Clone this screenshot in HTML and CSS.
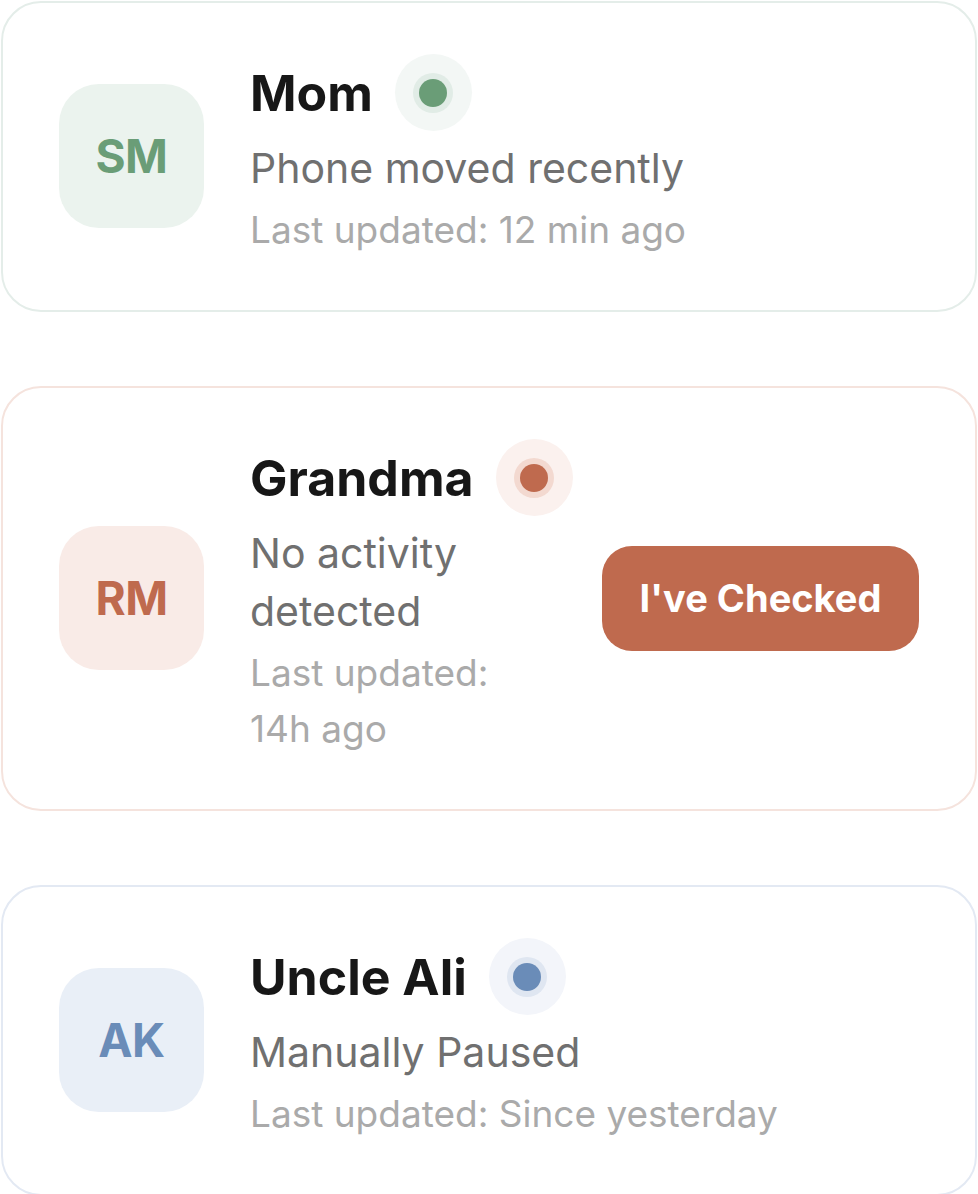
FILE: index.html
```html
<!DOCTYPE html>
<html lang="en">
<head>
<meta charset="utf-8">
<title>Family status</title>
<link rel="stylesheet" href="styles.css">
</head>
<body>
<div class="list">
  <div class="card card-green">
    <div class="avatar">SM</div>
    <div class="info">
      <div class="name-row">
        <span class="name">Mom</span>
        <span class="dot"><span class="dot-ring"><span class="dot-core"></span></span></span>
      </div>
      <div class="status">Phone moved recently</div>
      <div class="updated">Last updated: 12 min ago</div>
    </div>
  </div>

  <div class="card card-red">
    <div class="avatar">RM</div>
    <div class="info info-narrow">
      <div class="name-row">
        <span class="name">Grandma</span>
        <span class="dot"><span class="dot-ring"><span class="dot-core"></span></span></span>
      </div>
      <div class="status">No activity detected</div>
      <div class="updated">Last updated: 14h ago</div>
    </div>
    <button class="check-btn">I've Checked</button>
  </div>

  <div class="card card-blue">
    <div class="avatar">AK</div>
    <div class="info">
      <div class="name-row">
        <span class="name">Uncle Ali</span>
        <span class="dot"><span class="dot-ring"><span class="dot-core"></span></span></span>
      </div>
      <div class="status">Manually Paused</div>
      <div class="updated">Last updated: Since yesterday</div>
    </div>
  </div>
</div>
</body>
</html>
```

FILE: styles.css
```css
* { box-sizing: border-box; }

html, body {
  margin: 0;
  padding: 0;
  background: #ffffff;
}

body {
  font-family: Inter, "Noto Sans", "Liberation Sans", sans-serif;
  color: #1a1a1a;
}

.list {
  display: flex;
  flex-direction: column;
  gap: 74px;
  padding: 1px;
}

.card {
  display: flex;
  align-items: center;
  gap: 46px;
  padding: 51px 56px 52px;
  border: 2px solid #e4ede9;
  border-radius: 40px;
  background: #ffffff;
}

.card-red { border-color: #f5e3dd; }
.card-blue { border-color: #e3e9f3; }

.avatar {
  flex: none;
  width: 145px;
  height: 144px;
  border-radius: 40px;
  display: flex;
  align-items: center;
  justify-content: center;
  font-size: 46px;
  font-weight: 700;
  letter-spacing: -0.5px;
}

.card-green .avatar { background: #ebf3ee; color: #6a9d77; }
.card-red .avatar { background: #f9ebe7; color: #bf6a4e; }
.card-blue .avatar { background: #e9eff7; color: #6a8cb8; }

.info {
  flex: 1;
  min-width: 0;
  display: flex;
  flex-direction: column;
}

.name-row {
  display: flex;
  align-items: center;
  gap: 22px;
  height: 77px;
}

.name {
  font-size: 50px;
  font-weight: 700;
  color: #171717;
}

.dot {
  flex: none;
  width: 77px;
  height: 77px;
  border-radius: 50%;
  display: flex;
  align-items: center;
  justify-content: center;
}

.dot-ring {
  width: 40px;
  height: 40px;
  border-radius: 50%;
  display: flex;
  align-items: center;
  justify-content: center;
}

.dot-core {
  width: 28px;
  height: 28px;
  border-radius: 50%;
}

.card-green .dot { background: #f3f7f5; }
.card-green .dot-ring { background: #e1ece6; }
.card-green .dot-core { background: #6a9d77; }

.card-red .dot { background: #fbf1ee; }
.card-red .dot-ring { background: #f3d9d0; }
.card-red .dot-core { background: #bf6a4e; }

.card-blue .dot { background: #f3f5fa; }
.card-blue .dot-ring { background: #dfe6f1; }
.card-blue .dot-core { background: #6a8cb8; }

.status {
  font-size: 41px;
  line-height: 58px;
  color: #707070;
  margin-top: 8px;
}

.updated {
  font-size: 37px;
  line-height: 56px;
  color: #aaaaaa;
  margin-top: 5px;
}

.info-narrow { flex: 0 0 320px; }
.info-narrow .updated { max-width: 290px; }

.check-btn {
  flex: none;
  margin-left: -14px;
  width: 317px;
  height: 105px;
  border: none;
  border-radius: 30px;
  background: #bf6a4e;
  color: #ffffff;
  font-family: inherit;
  font-size: 38px;
  font-weight: 700;
}
```
